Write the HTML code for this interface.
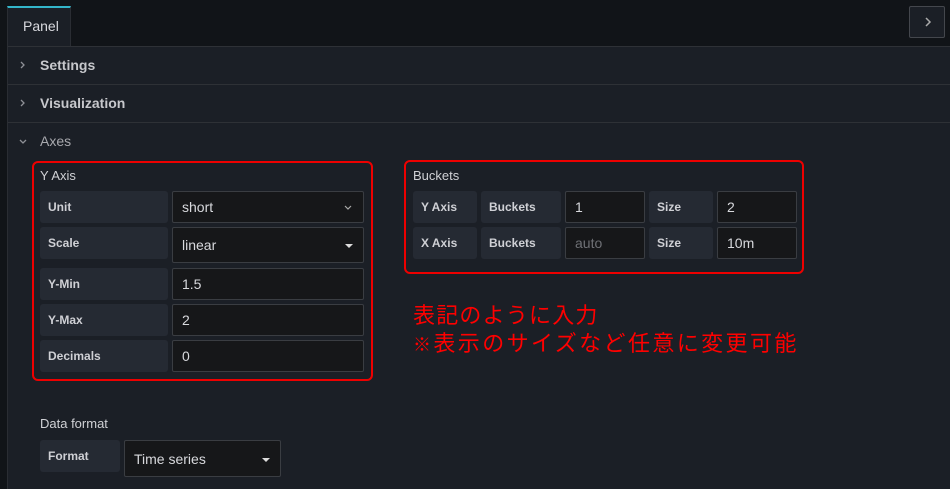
<!DOCTYPE html>
<html><head><meta charset="utf-8"><style>
*{box-sizing:border-box;margin:0;padding:0}
body{width:950px;height:489px;background:#111418;font-family:"Liberation Sans","Noto Sans CJK JP",sans-serif;position:relative;overflow:hidden;color:#ccccdc}
.a{position:absolute}
.panel{left:7px;top:46px;width:943px;height:443px;background:#1b1f26;border-left:1px solid #2a2d33}
.tab{left:7px;top:6px;width:64px;height:41px;background:#1b1f26;border-top:2px solid #33b5c9;border-left:1px solid #2a2d33;border-right:1px solid #2a2d33;font-size:14px;color:#d8d9de;padding:10px 0 0 15px}
.hr{left:8px;width:942px;height:1px;background:#2e3136}
.sec{font-size:14px;font-weight:bold;color:#c7c8cc;left:40px}
.lbl{background:#252a33;border-radius:3px;font-size:12px;font-weight:bold;color:#cfd0d5;padding-left:8px;display:flex;align-items:center}
.inp{background:#161719;border:1px solid #3a3d42;border-radius:2px;font-size:14px;color:#d8d9dd;padding-left:9px;display:flex;align-items:center}
.red{border:2px solid #e00;border-radius:6px}
.h{font-size:13px;color:#d0d1d5}
.jp{color:#f00;font-size:22px;letter-spacing:1.2px;left:413px;line-height:28px;font-family:"Noto Sans CJK JP",sans-serif}
</style></head><body>
<div class="a panel"></div>
<div class="a tab">Panel</div>
<div class="a" style="left:909px;top:6px;width:36px;height:32px;border:1px solid #44474d;border-radius:2px;background:#1b1f26"><svg class="a" style="left:12px;top:9px" width="12" height="12"><path d="M4 2L8 6L4 10" stroke="#aaa" stroke-width="1.5" fill="none"/></svg></div>
<div class="a hr" style="top:46px"></div>
<div class="a hr" style="top:84px"></div>
<div class="a hr" style="top:122px"></div>
<svg class="a" style="left:18px;top:60px" width="10" height="10"><path d="M3 2L6 5L3 8" stroke="#8e9096" stroke-width="1.3" fill="none"/></svg>
<div class="a sec" style="top:57px">Settings</div>
<svg class="a" style="left:18px;top:98px" width="10" height="10"><path d="M3 2L6 5L3 8" stroke="#8e9096" stroke-width="1.3" fill="none"/></svg>
<div class="a sec" style="top:95px">Visualization</div>
<svg class="a" style="left:18px;top:137px" width="10" height="10"><path d="M2 3L5 6L8 3" stroke="#8e9096" stroke-width="1.3" fill="none"/></svg>
<div class="a" style="left:40px;top:133px;font-size:14px;color:#a8a9ae">Axes</div>

<div class="a red" style="left:32px;top:161px;width:341px;height:220px"></div>
<div class="a h" style="left:40px;top:168px">Y Axis</div>
<div class="a lbl" style="left:40px;top:191px;width:128px;height:32px">Unit</div>
<div class="a inp" style="left:172px;top:191px;width:192px;height:32px">short<svg style="position:absolute;right:10px;top:12px" width="10" height="8"><path d="M2 2L5 5L8 2" stroke="#aaa" stroke-width="1.2" fill="none"/></svg></div>
<div class="a lbl" style="left:40px;top:227px;width:128px;height:32px">Scale</div>
<div class="a inp" style="left:172px;top:227px;width:192px;height:36px">linear<svg style="position:absolute;right:9px;top:15px" width="10" height="6"><path d="M1 1L9 1L5 5Z" fill="#ddd"/></svg></div>
<div class="a lbl" style="left:40px;top:268px;width:128px;height:32px">Y-Min</div>
<div class="a inp" style="left:172px;top:268px;width:192px;height:32px">1.5</div>
<div class="a lbl" style="left:40px;top:304px;width:128px;height:32px">Y-Max</div>
<div class="a inp" style="left:172px;top:304px;width:192px;height:32px">2</div>
<div class="a lbl" style="left:40px;top:340px;width:128px;height:32px">Decimals</div>
<div class="a inp" style="left:172px;top:340px;width:192px;height:32px">0</div>

<div class="a red" style="left:404px;top:160px;width:400px;height:114px"></div>
<div class="a h" style="left:413px;top:168px">Buckets</div>
<div class="a lbl" style="left:413px;top:191px;width:64px;height:32px">Y Axis</div>
<div class="a lbl" style="left:481px;top:191px;width:80px;height:32px">Buckets</div>
<div class="a inp" style="left:565px;top:191px;width:80px;height:32px">1</div>
<div class="a lbl" style="left:649px;top:191px;width:64px;height:32px">Size</div>
<div class="a inp" style="left:717px;top:191px;width:80px;height:32px">2</div>
<div class="a lbl" style="left:413px;top:227px;width:64px;height:32px">X Axis</div>
<div class="a lbl" style="left:481px;top:227px;width:80px;height:32px">Buckets</div>
<div class="a inp" style="left:565px;top:227px;width:80px;height:32px;color:#6e7075">auto</div>
<div class="a lbl" style="left:649px;top:227px;width:64px;height:32px">Size</div>
<div class="a inp" style="left:717px;top:227px;width:80px;height:32px">10m</div>

<div class="a jp" style="top:300px">表記のように入力</div>
<div class="a jp" style="top:328px;letter-spacing:2.4px"><span style="font-size:18px">※</span>表示のサイズなど任意に変更可能</div>

<div class="a h" style="left:40px;top:416px">Data format</div>
<div class="a lbl" style="left:40px;top:440px;width:80px;height:32px">Format</div>
<div class="a inp" style="left:124px;top:440px;width:157px;height:37px">Time series<svg style="position:absolute;right:9px;top:16px" width="10" height="6"><path d="M1 1L9 1L5 5Z" fill="#ddd"/></svg></div>
</body></html>
